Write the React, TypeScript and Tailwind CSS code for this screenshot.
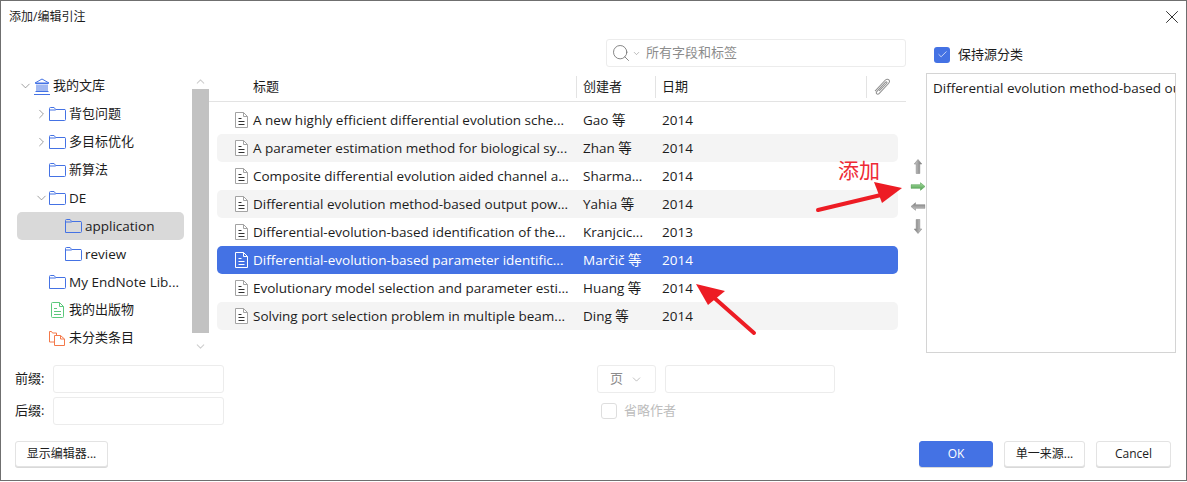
import React from "react";
import { ChevronDown, ChevronRight, ChevronUp, Search, X, Check } from "lucide-react";
import { clsx } from "clsx";

const BLUE = "#4472e4";

function Folder({ color = BLUE }: { color?: string }) {
  return (
    <svg width="17" height="14" viewBox="0 0 17 14" fill="none" className="shrink-0">
      <path d="M.5 13.500V1.500a1 1 0 0 1 1-1h3.600l1.600 2h9.300a.9.9 0 0 1 .5.8v9.200a1 1 0 0 1-1 1H.5zM.5 3h6.200" stroke={color} strokeWidth="1" />
    </svg>
  );
}

function LibraryIcon() {
  return (
    <svg width="16" height="17" viewBox="0 0 16 17" fill="none" stroke={BLUE} strokeWidth="1" className="shrink-0">
      <path d="M1 5 8 1l7 4zM1.500 5.500h13M3 6.500v6.500M5 6.500v6.500M7 6.500v6.500M9 6.500v6.500M11 6.500v6.500M13 6.500v6.500M1.500 13.500h13M0 16.500h16" />
    </svg>
  );
}

function DocIcon({ color = "#a3a3a3", lines = "#333333", fill = "#ffffff" }: { color?: string; lines?: string; fill?: string }) {
  return (
    <svg width="13" height="16" viewBox="0 0 13 16" fill={fill} className="shrink-0">
      <path d="M.5.5h8l4 4v11H.5z" stroke={color} />
      <path d="M8.500.5v4h4" stroke={color} fill="none" />
      <path d="M3.500 6.500h3M3.500 9.500h6M3.500 12.500h6" stroke={lines} fill="none" />
    </svg>
  );
}

function GreenDoc() {
  return (
    <svg width="13" height="16" viewBox="0 0 13 16" fill="none" className="shrink-0">
      <path d="M1.500.5h7l4 4v10a1 1 0 0 1-1 1h-10a1 1 0 0 1-1-1v-13a1 1 0 0 1 1-1z" stroke="#5bc97c" />
      <path d="M8.500.5v4h4M3 6.500h3M3 9.500h7M3 12.500h7" stroke="#5bc97c" />
    </svg>
  );
}

function UnfiledIcon() {
  return (
    <svg width="17" height="16" viewBox="0 0 17 16" fill="none" stroke="#f4794a" className="shrink-0">
      <path d="M5.500 12H.5V1.500h2l1 1.500h4V5" />
      <path d="M5.500 5.500h6l4 3.500v6.500h-10z" />
      <path d="M11.500 5.500V9h4" />
    </svg>
  );
}

function ClipIcon() {
  return (
    <svg width="18" height="18" viewBox="0 0 16 16" fill="none" stroke="#8f8f8f" strokeWidth=".9">
      <path d="M1.800 11.600 10.600 2.200c1.200-1.300 2.700-1.400 3.500-.6s.7 2.200-.5 3.500l-8 8.500c-.8.800-1.700 1-2.300.4s-.4-1.500.4-2.300l7.300-7.800c.5-.5 1-.6 1.300-.3s.2.800-.3 1.300L5.500 11.500" />
    </svg>
  );
}

function MoveArrow({ dir, green }: { dir: "up" | "right" | "left" | "down"; green?: boolean }) {
  const rot = { up: "rotate-0", right: "rotate-90", down: "rotate-180", left: "-rotate-90" }[dir];
  const id = green ? "moveGreen" : "moveGray";
  return (
    <svg width="10" height="15" viewBox="0 0 10 15" className={rot}>
      <defs>
        <linearGradient id={id} x1="0" y1="0" x2="1" y2="0">
          <stop offset="0" stopColor={green ? "#a8dca2" : "#d0d0d0"} />
          <stop offset="1" stopColor={green ? "#4c9f4c" : "#777777"} />
        </linearGradient>
      </defs>
      <path d="M5 .5 8.800 5H6.800v9.500H3.200V5H1.200z" fill={`url(#${id})`} stroke={green ? "#5aa55a" : "#8f8f8f"} strokeWidth=".6" />
    </svg>
  );
}

type TreeRow = { label: string; depth: number; caret?: "open" | "closed"; icon: React.ReactNode; active?: boolean; latin?: boolean };

const tree: TreeRow[] = [
  { label: "我的文库", depth: 0, caret: "open", icon: <LibraryIcon /> },
  { label: "背包问题", depth: 1, caret: "closed", icon: <Folder /> },
  { label: "多目标优化", depth: 1, caret: "closed", icon: <Folder /> },
  { label: "新算法", depth: 1, icon: <Folder /> },
  { label: "DE", depth: 1, caret: "open", icon: <Folder />, latin: true },
  { label: "application", depth: 2, icon: <Folder />, active: true, latin: true },
  { label: "review", depth: 2, icon: <Folder />, latin: true },
  { label: "My EndNote Lib...", depth: 1, icon: <Folder />, latin: true },
  { label: "我的出版物", depth: 1, icon: <span className="flex w-[17px] justify-center"><GreenDoc /></span> },
  { label: "未分类条目", depth: 1, icon: <UnfiledIcon /> },
];

const rows = [
  ["A new highly efficient differential evolution sche...", "Gao 等", "2014"],
  ["A parameter estimation method for biological sy...", "Zhan 等", "2014"],
  ["Composite differential evolution aided channel a...", "Sharma...", "2014"],
  ["Differential evolution method-based output pow...", "Yahia 等", "2014"],
  ["Differential-evolution-based identification of the...", "Kranjcic...", "2013"],
  ["Differential-evolution-based parameter identific...", "Marčič 等", "2014"],
  ["Evolutionary model selection and parameter esti...", "Huang 等", "2014"],
  ["Solving port selection problem in multiple beam...", "Ding 等", "2014"],
];

function TreeItem({ row }: { row: TreeRow }) {
  const pad = row.depth === 0 ? "pl-[1px]" : row.depth === 1 ? "pl-[17px]" : "pl-[48px]";
  return (
    <div className={clsx("flex h-[28px] items-center rounded-[5px]", pad, row.active && "bg-[#d9d9d9]")}>
      {row.depth < 2 && (
        <span className="flex w-[15px] shrink-0 justify-center">
          {row.caret === "open" && <ChevronDown size={16} strokeWidth={1} className="text-[#666]" />}
          {row.caret === "closed" && <ChevronRight size={16} strokeWidth={1} className="text-[#666]" />}
        </span>
      )}
      <span className={clsx("flex", row.depth === 0 && "ml-[1px]")}>{row.icon}</span>
      <span className={clsx("ml-[3px] whitespace-nowrap", row.latin ? "pt-[1px] text-[13.5px]" : "text-[13px]")}>{row.label}</span>
    </div>
  );
}

function Field({ className }: { className: string }) {
  return <div className={clsx("h-[28px] rounded-[3px] border border-[#ececec] bg-white", className)} />;
}

function Btn({ children, className }: { children: React.ReactNode; className: string }) {
  return (
    <div className={clsx("flex h-[26px] items-center justify-center rounded-[3px] border text-[12px] shadow-[0_1px_0_#d9d9d9]", className)}>
      {children}
    </div>
  );
}

export default function App() {
  return (
    <div
      className="relative h-[481px] w-[1187px] overflow-hidden border border-[#6f6f6f] bg-white text-[13px] text-[#1c1c1c]"
      style={{ fontFamily: '"Open Sans", "Noto Sans CJK SC", sans-serif' }}
    >
      <div className="flex h-[31px] items-center justify-between pl-[8px] pr-[3px]">
        <span className="text-[12px]">添加/编辑引注</span>
        <X size={22} strokeWidth={1} className="text-[#222]" />
      </div>

      <div className="mt-[7px] flex h-[28px] items-center">
        <div className="ml-[605px] flex h-[28px] w-[300px] items-center rounded-[3px] border border-[#ececec] pl-[4px] text-[#8a8a8a]">
          <Search size={20} strokeWidth={1} className="text-[#6f6f6f]" />
          <ChevronDown size={9} strokeWidth={1.5} className="ml-[1px]" />
          <span className="ml-[5px] text-[#8c8c8c]">所有字段和标签</span>
        </div>
        <div className="ml-[28px] mt-[3px] flex items-center">
          <span className="flex h-[16px] w-[16px] items-center justify-center rounded-[3px] bg-[#4472e4]">
            <Check size={11} strokeWidth={1.5} className="text-white" />
          </span>
          <span className="ml-[8px]">保持源分类</span>
        </div>
      </div>

      <div className="mt-[5px] flex h-[280px]">
        {/* left: library tree */}
        <div className="ml-[16px] w-[167px] shrink-0">
          {tree.map((r) => (
            <TreeItem key={r.label} row={r} />
          ))}
        </div>
        <div className="ml-[8px] flex w-[17px] shrink-0 flex-col items-center">
          <ChevronUp size={13} strokeWidth={2} className="mt-[2px] h-[15px] shrink-0 text-[#cfcfcf]" />
          <div className="h-[244px] w-full shrink-0 bg-[#c2c2c2]" />
          <ChevronDown size={13} strokeWidth={2} className="mt-[7px] shrink-0 text-[#cfcfcf]" />
        </div>

        {/* middle: reference table */}
        <div className="w-[697px] shrink-0">
          <div className="flex h-[30px] items-center border-b border-[#e3e3e3]">
            <span className="ml-[44px] w-[323px]">标题</span>
            <span className="h-[22px] w-px bg-[#e3e3e3]" />
            <span className="ml-[6px] w-[72px]">创建者</span>
            <span className="h-[22px] w-px bg-[#e3e3e3]" />
            <span className="ml-[6px] w-[204px]">日期</span>
            <span className="h-[22px] w-px bg-[#e3e3e3]" />
            <span className="ml-[6px] flex"><ClipIcon /></span>
          </div>
          <div className="ml-[8px] mt-[4px] w-[681px] text-[13.5px]">
            {rows.map((r, i) => {
              const selected = i === 5;
              return (
                <div
                  key={r[0]}
                  className={clsx(
                    "flex h-[28px] items-center rounded-[5px]",
                    selected ? "bg-[#4472e4] text-white" : i % 2 === 1 ? "bg-[#f4f4f4]" : "bg-white",
                  )}
                >
                  <span className="ml-[18px] flex w-[18px]">
                    {selected ? <DocIcon color="#ffffff" lines="#ffffff" fill="none" /> : <DocIcon />}
                  </span>
                  <span className="w-[330px] whitespace-nowrap pt-[1px]">{r[0]}</span>
                  <span className="w-[79px] whitespace-nowrap pt-[1px]">{r[1]}</span>
                  <span className="pt-[1px]">{r[2]}</span>
                </div>
              );
            })}
          </div>
        </div>

        {/* move buttons */}
        <div className="flex w-[20px] shrink-0 flex-col items-center justify-start pl-[4px] pt-[84px]">
          {(["up", "right", "left", "down"] as const).map((d) => (
            <div key={d} className="flex h-[20px] items-center justify-center">
              <MoveArrow dir={d} green={d === "right"} />
            </div>
          ))}
        </div>

        <div className="mt-[1px] h-[280px] w-[250px] shrink-0 overflow-hidden border border-[#d4d4d4] pl-[6px] pt-[4px] text-[13.5px]">
          <div className="whitespace-nowrap">Differential evolution method-based output power</div>
        </div>
      </div>

      <div className="mt-[13px] flex">
        <div className="ml-[14px] flex w-[209px] shrink-0 flex-col gap-[4px]">
          <div className="flex items-center">
            <span className="w-[38px]">前缀:</span>
            <Field className="w-[171px]" />
          </div>
          <div className="flex items-center">
            <span className="w-[38px]">后缀:</span>
            <Field className="w-[171px]" />
          </div>
        </div>
        <div className="ml-[373px] flex flex-col">
          <div className="flex gap-[9px]">
            <div className="flex h-[28px] w-[59px] items-center justify-center gap-[7px] rounded-[3px] border border-[#ececec] text-[#8c8c8c]">
              页 <ChevronDown size={13} strokeWidth={1} />
            </div>
            <Field className="w-[170px]" />
          </div>
          <div className="ml-[4px] mt-[8px] flex items-center text-[#bdbdbd]">
            <span className="h-[16px] w-[16px] rounded-[3px] border border-[#dedede]" />
            <span className="ml-[7px]">省略作者</span>
          </div>
        </div>
      </div>

      <div className="mt-[16px] flex">
        <Btn className="ml-[14px] w-[93px] border-[#e3e3e3] bg-white">显示编辑器...</Btn>
        <div className="ml-auto mr-[15px] flex gap-[11px]">
          <Btn className="w-[74px] border-[#4472e4] bg-[#4472e4] text-white">OK</Btn>
          <Btn className="w-[81px] border-[#e3e3e3] bg-white">单一来源...</Btn>
          <Btn className="w-[75px] border-[#e3e3e3] bg-white">Cancel</Btn>
        </div>
      </div>

      {/* red annotations on top of the screenshot */}
      <span className="absolute left-[837px] top-[155px] text-[21px] leading-[28px] text-[#ee2a35]">添加</span>
      <svg className="absolute left-0 top-0" width="1187" height="481" fill="none">
        <path d="M817 209 882 193.500" stroke="#ed1c24" strokeWidth="4" strokeLinecap="round" />
        <path d="M901 187 873 181 881 202z" fill="#ed1c24" />
        <path d="M753 332 710 294" stroke="#ed1c24" strokeWidth="4" strokeLinecap="round" />
        <path d="M695 283 724 290 707 304z" fill="#ed1c24" />
      </svg>
    </div>
  );
}
